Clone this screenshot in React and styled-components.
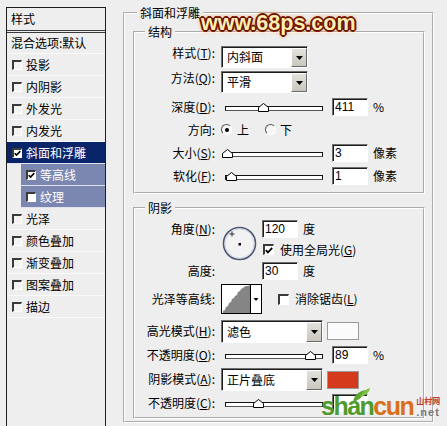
import React from 'react'
import styled, { createGlobalStyle } from 'styled-components'

const GlobalStyle = createGlobalStyle`
  html, body { margin:0; padding:0; }
  body {
    background:#eeeeee;
    font-family:"Noto Sans CJK SC", "Liberation Sans", sans-serif;
    font-size:12px;
    color:#000;
    overflow:hidden;
  }
`

const Page = styled.div`
  position:relative;
  display:flex;
  align-items:flex-start;
  gap:17px;
  width:447px;
  height:426px;
  padding:6px 0 0 6px;
  box-sizing:border-box;
  overflow:hidden;
`

/* ---------- left style list ---------- */

const StyleList = styled.div`
  flex-shrink:0;
  width:100px;
  height:440px;
  margin-top:1px;
  box-sizing:border-box;
  border:1px solid #1e1e1e;
`

const ListHead = styled.div`
  height:25px;
  line-height:22px;
  padding-left:4px;
  box-sizing:border-box;
  border-bottom:3px double #3a3a3a;
`

const tones = {
  active: '#0a246a',
  sub: '#7b87b1',
}

const ListItem = styled.div`
  display:flex;
  align-items:center;
  gap:4px;
  height:${p => p.$h || 22}px;
  box-sizing:border-box;
  margin-left:${p => (p.$tone === 'sub' ? 14 : 0)}px;
  padding-left:${p => (p.$plain ? 4 : 5)}px;
  background:${p => tones[p.$tone] || 'transparent'};
  color:${p => (p.$tone ? '#fff' : '#000')};
  border-bottom:1px solid ${p => (p.$tone ? '#dfe3ee' : '#fafafa')};
  line-height:14px;
  white-space:nowrap;
`

const Check = styled.span`
  display:inline-flex;
  align-items:center;
  justify-content:center;
  flex-shrink:0;
  width:${p => p.$size || 10}px;
  height:${p => p.$size || 10}px;
  box-sizing:border-box;
  border-style:solid;
  border-width:2px 1px 1px 2px;
  border-color:#3a3a3a #ffffff #ffffff #3a3a3a;
  background:${p => (p.$white ? '#fff' : '#f3f3f3')};
`

const Tick = () => (
  <svg width="8" height="7" viewBox="0 0 8 7">
    <polyline points="0.8,3.2 2.9,5.4 7.2,0.8" fill="none" stroke="#000" strokeWidth="1.8" />
  </svg>
)

/* ---------- right panel ---------- */

const Group = styled.fieldset`
  flex-shrink:0;
  width:${p => p.$w}px;
  margin:${p => p.$mt || 0}px 0 0;
  padding:${p => p.$pad};
  box-sizing:border-box;
  border:2px groove #ffffff;
  min-width:0;
`

const Legend = styled.legend`
  margin-left:${p => p.$ml}px;
  padding:0 3px;
  line-height:14px;
`

const Row = styled.div`
  display:flex;
  align-items:${p => (p.$top ? 'flex-start' : 'center')};
  height:${p => p.$h || 22}px;
  margin-top:${p => p.$mt || 0}px;
`

const Label = styled.span`
  flex-shrink:0;
  width:80px;
  margin-right:6px;
  text-align:right;
  line-height:14px;
  white-space:nowrap;
`

const Select = styled.div`
  display:flex;
  flex-shrink:0;
  width:${p => p.$w}px;
  height:${p => p.$h || 22}px;
  box-sizing:border-box;
  border:1px solid;
  border-color:#707070 #ffffff #ffffff #707070;
  box-shadow:inset 1px 1px 0 #1c1c1c;
  background:#fff;
`

const SelectText = styled.span`
  flex:1;
  align-self:center;
  padding-left:5px;
  line-height:14px;
`

const DropButton = styled.span`
  display:flex;
  align-items:center;
  justify-content:center;
  width:16px;
  margin:1px 0 0;
  box-sizing:border-box;
  border:1px solid;
  border-color:#ffffff #6a6a6a #6a6a6a #ffffff;
  background:linear-gradient(#e4e2dc, #c9c6bd);
`

const Arrow = () => (
  <svg width="7" height="4" viewBox="0 0 7 4">
    <polygon points="0,0 7,0 3.5,4" fill="#000" />
  </svg>
)

const SliderBox = styled.div`
  display:flex;
  align-items:center;
  flex-shrink:0;
  width:106px;
  height:100%;
  padding:0 4px;
  box-sizing:border-box;
`

const Track = styled.div`
  position:relative;
  flex:1;
  height:5px;
  margin-top:3px;
  box-sizing:border-box;
  border:1px solid #111;
  border-bottom-color:#555;
  background:#fff;
`

const Thumb = styled.svg`
  position:absolute;
  bottom:-2px;
`

const Slider = ({ value }) => (
  <SliderBox>
    <Track>
      <Thumb width="11" height="9" viewBox="0 0 11 9" style={{ left: `calc(${value * 100}% - 6px)` }}>
        <polygon points="0.5,8.5 0.5,4.5 5.5,0.5 10.5,4.5 10.5,8.5" fill="#fff" stroke="#000" />
      </Thumb>
    </Track>
  </SliderBox>
)

const Field = styled.span`
  display:inline-block;
  flex-shrink:0;
  width:36px;
  height:18px;
  margin-left:${p => (p.$ml === undefined ? 5 : p.$ml)}px;
  padding-left:2px;
  box-sizing:border-box;
  border:1px solid;
  border-color:#707070 #ffffff #ffffff #707070;
  box-shadow:inset 1px 1px 0 #1c1c1c;
  background:#fff;
  font-family:"Liberation Sans", sans-serif;
  line-height:16px;
`

const Unit = styled.span`
  margin-left:5px;
  line-height:14px;
  white-space:nowrap;
`

const Radio = styled.span`
  display:inline-flex;
  align-items:center;
  justify-content:center;
  flex-shrink:0;
  width:11px;
  height:11px;
  margin-left:${p => p.$ml || 0}px;
  box-sizing:border-box;
  border-radius:50%;
  border:1px solid;
  border-color:#555 #fff #fff #555;
  background:#f6f6f6;
  &::after {
    content:"";
    display:${p => (p.$on ? 'block' : 'none')};
    width:4px;
    height:4px;
    border-radius:50%;
    background:#000;
  }
`

const RadioText = styled.span`
  margin-left:${p => p.$ml}px;
  line-height:14px;
`

const Swatch = styled.span`
  flex-shrink:0;
  width:32px;
  height:18px;
  margin-left:4px;
  box-sizing:border-box;
  border:1px solid #9a9a9a;
  background:${p => p.$color};
`

const AngleBlock = styled.div`
  display:grid;
  grid-template-columns:80px 35px auto;
  grid-template-rows:20px 21px 22px;
  column-gap:6px;
  align-items:center;
`

const Dial = styled.svg`
  grid-column:2;
  grid-row:1 / span 3;
  align-self:start;
  margin:7px 0 0 1px;
`

const CheckLine = styled.span`
  display:flex;
  align-items:center;
  gap:6px;
  margin-left:${p => p.$ml || 0}px;
  line-height:14px;
  white-space:nowrap;
`

/* ---------- watermarks ---------- */

const SiteStamp = styled.div`
  position:absolute;
  left:201px;
  top:13px;
  font-family:"Liberation Sans", sans-serif;
  font-weight:bold;
  font-size:21.5px;
  line-height:21px;
  color:#fdefb4;
  text-shadow:
    1px 0 0 #6c1000, -1px 0 0 #6c1000, 0 1px 0 #6c1000, 0 -1px 0 #6c1000,
    1px 1px 0 #6c1000, -1px -1px 0 #6c1000, 1px -1px 0 #6c1000, -1px 1px 0 #6c1000,
    2px 0 0 #7e1c02, -2px 0 0 #7e1c02, 0 2px 0 #7e1c02, 0 -2px 0 #7e1c02,
    0 0 4px #f0953a, 0 0 6px #f5b060;
  pointer-events:none;
`

const CornerMark = styled.div`
  position:absolute;
  left:321px;
  top:394px;
  display:grid;
  grid-template-columns:auto auto auto;
  grid-template-rows:11px 14px;
  align-items:end;
  font-family:"Liberation Sans", sans-serif;
  font-weight:bold;
  pointer-events:none;
`

const MarkWord = styled.span`
  grid-row:1 / span 2;
  font-size:25px;
  line-height:25px;
  letter-spacing:-1.5px;
  color:${p => p.$color};
`

const MarkCn = styled.span`
  grid-column:3;
  grid-row:1;
  margin-left:3px;
  font-family:"Noto Sans CJK SC", sans-serif;
  font-size:8px;
  line-height:9px;
  color:#c23a28;
`

const MarkNet = styled.span`
  grid-column:3;
  grid-row:2;
  align-self:start;
  margin:2px 0 0 3px;
  font-size:11px;
  line-height:11px;
  letter-spacing:1px;
  white-space:nowrap;
  color:#7a7a7a;
`

const Leaf = styled.svg`
  position:absolute;
  left:30px;
  top:-7px;
`

const listRows = [
  { text: '投影' },
  { text: '内阴影' },
  { text: '外发光' },
  { text: '内发光' },
  { text: '斜面和浮雕', tone: 'active', on: true },
  { text: '等高线', tone: 'sub', on: true },
  { text: '纹理', tone: 'sub' },
  { text: '光泽' },
  { text: '颜色叠加' },
  { text: '渐变叠加' },
  { text: '图案叠加' },
  { text: '描边' },
]

export default function App() {
  return (
    <Page>
      <GlobalStyle />

      <StyleList>
        <ListHead>样式</ListHead>
        <ListItem $plain $h={21}>混合选项:默认</ListItem>
        {listRows.map(r => (
          <ListItem key={r.text} $tone={r.tone}>
            <Check $white={!!r.tone}>{r.on && <Tick />}</Check>
            {r.text}
          </ListItem>
        ))}
      </StyleList>

      <Group $w={311} $pad="5px 7px 2px 8px">
        <Legend $ml={4}>斜面和浮雕</Legend>

        <Group $w={292} $pad="7px 0 5px 0">
          <Legend $ml={10}>结构</Legend>
          <Row $top $h={25}>
            <Label>样式(<u>T</u>):</Label>
            <Select $w={87}>
              <SelectText>内斜面</SelectText>
              <DropButton><Arrow /></DropButton>
            </Select>
          </Row>
          <Row $top $h={24}>
            <Label>方法(<u>Q</u>):</Label>
            <Select $w={87}>
              <SelectText>平滑</SelectText>
              <DropButton><Arrow /></DropButton>
            </Select>
          </Row>
          <Row $h={23}>
            <Label>深度(<u>D</u>):</Label>
            <Slider value={0.4} />
            <Field>411</Field>
            <Unit>%</Unit>
          </Row>
          <Row $h={23}>
            <Label>方向:</Label>
            <Radio $on />
            <RadioText $ml={5}>上</RadioText>
            <Radio $ml={16} />
            <RadioText $ml={4}>下</RadioText>
          </Row>
          <Row $h={23}>
            <Label>大小(<u>S</u>):</Label>
            <Slider value={0.02} />
            <Field>3</Field>
            <Unit>像素</Unit>
          </Row>
          <Row $h={23}>
            <Label>软化(<u>F</u>):</Label>
            <Slider value={0.06} />
            <Field>1</Field>
            <Unit>像素</Unit>
          </Row>
        </Group>

        <Group $w={292} $mt={7} $pad="4px 0 3px 0">
          <Legend $ml={10}>阴影</Legend>
          <AngleBlock>
            <Label>角度(<u>N</u>):</Label>
            <Dial width="35" height="35" viewBox="0 0 35 35">
              <circle cx="17.5" cy="17.5" r="16" fill="#f2f2f2" stroke="#4d5874" strokeWidth="1.6" />
              <circle cx="17.5" cy="17.5" r="14.6" fill="none" stroke="#c9cdd8" strokeWidth="0.8" />
              <line x1="10" y1="5.5" x2="10" y2="10.5" stroke="#333" />
              <line x1="7.5" y1="8" x2="12.5" y2="8" stroke="#333" />
              <rect x="16.5" y="17" width="2.5" height="2.5" fill="#000" />
            </Dial>
            <Row>
              <Field $ml={0}>120</Field>
              <Unit>度</Unit>
            </Row>
            <CheckLine $ml={1} style={{ gridColumn: 3, gridRow: 2 }}>
              <Check $size={11} $white><Tick /></Check>
              <span>使用全局光(<u>G</u>)</span>
            </CheckLine>
            <Label style={{ gridColumn: 1, gridRow: 3 }}>高度:</Label>
            <Row style={{ gridColumn: 3, gridRow: 3 }}>
              <Field $ml={0}>30</Field>
              <Unit>度</Unit>
            </Row>
          </AngleBlock>

          <Row $h={30} $mt={2}>
            <Label>光泽等高线:</Label>
            <svg width="41" height="30" viewBox="0 0 41 30">
              <rect x="0.5" y="0.5" width="40" height="29" fill="#fff" stroke="#000" />
              <polygon
                points="2,29 2,27 4,26 5,23 7,22 8,19 10,18 11,15 13,14 14,12 16,11 17,8 19,7 20,5 22,4 23,3 25,2 27,2 29,1 29,29"
                fill="#858585"
              />
              <line x1="29.5" y1="0" x2="29.5" y2="30" stroke="#000" />
              <polygon points="32.5,14 37.5,14 35,17" fill="#000" />
            </svg>
            <CheckLine $ml={16}>
              <Check $size={11} $white />
              <span>消除锯齿(<u>L</u>)</span>
            </CheckLine>
          </Row>

          <Row $top $h={24} $mt={6}>
            <Label style={{ marginTop: 4 }}>高光模式(<u>H</u>):</Label>
            <Select $w={102} $h={23}>
              <SelectText>滤色</SelectText>
              <DropButton><Arrow /></DropButton>
            </Select>
            <Swatch $color="#fbfbfb" style={{ marginTop: 2 }} />
          </Row>
          <Row $h={22}>
            <Label>不透明度(<u>O</u>):</Label>
            <Slider value={0.89} />
            <Field>89</Field>
            <Unit>%</Unit>
          </Row>
          <Row $top $h={24} $mt={2}>
            <Label style={{ marginTop: 4 }}>阴影模式(<u>A</u>):</Label>
            <Select $w={102} $h={23}>
              <SelectText>正片叠底</SelectText>
              <DropButton><Arrow /></DropButton>
            </Select>
            <Swatch $color="#d63a1c" style={{ marginTop: 3 }} />
          </Row>
          <Row $h={22}>
            <Label>不透明度(<u>C</u>):</Label>
            <Slider value={0.34} />
            <Field />
          </Row>
        </Group>
      </Group>

      <SiteStamp>www.68ps.com</SiteStamp>

      <CornerMark>
        <Leaf width="20" height="16" viewBox="0 0 20 16">
          <path d="M2 15 C3 8 8 4 15 3 C13 9 8 13 2 15 Z" fill="#5da52e" />
          <path d="M9 10 C11 5 15 2 19 1 C18 6 14 9 9 10 Z" fill="#7cc142" />
        </Leaf>
        <MarkWord $color="#4f9a2c">shan</MarkWord>
        <MarkWord $color="#d8701a">cun</MarkWord>
        <MarkCn>山村网</MarkCn>
        <MarkNet>.net</MarkNet>
      </CornerMark>
    </Page>
  )
}
